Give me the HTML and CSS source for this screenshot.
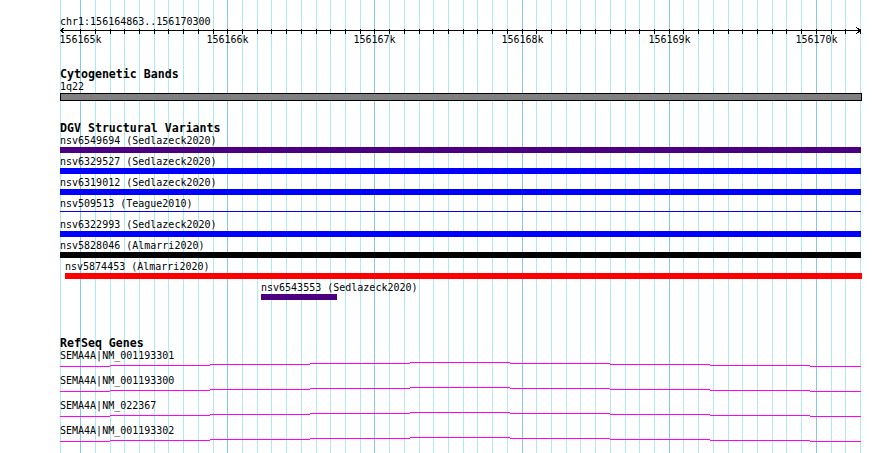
FILE: index.html
```html
<!doctype html>
<html lang="en">
<head>
  <meta charset="utf-8">
  <title>chr1:156164863..156170300</title>
  <meta name="viewport" content="width=device-width, initial-scale=1">
  <link rel="stylesheet" href="styles.css">
</head>
<body>
<div class="browser">
  <svg class="grid" id="grid" width="890" height="453"></svg>

  <div class="ruler">
    <div class="locus">chr1:156164863..156170300</div>
    <svg class="axis" id="axis" width="890" height="17">
      <line class="axis-line" x1="60" y1="3.5" x2="861" y2="3.5"/>
      <polyline class="axis-line" points="64.5,0.5 60.5,3.5 64.5,6.5"/>
      <polyline class="axis-line" points="856.5,0.5 860.5,3.5 856.5,6.5"/>
    </svg>
  </div>

  <section class="track cyto">
    <h2>Cytogenetic Bands</h2>
    <div class="label">1q22</div>
    <div class="band"></div>
  </section>

  <section class="track dgv">
    <h2>DGV Structural Variants</h2>
    <div class="feature">
      <div class="label">nsv6549694 (Sedlazeck2020)</div>
      <div class="bar indigo" style="width:801px"></div>
    </div>
    <div class="feature">
      <div class="label">nsv6329527 (Sedlazeck2020)</div>
      <div class="bar blue" style="width:801px"></div>
    </div>
    <div class="feature">
      <div class="label">nsv6319012 (Sedlazeck2020)</div>
      <div class="bar blue" style="width:801px"></div>
    </div>
    <div class="feature">
      <div class="label">nsv509513 (Teague2010)</div>
      <div class="bar line blue" style="width:801px"></div>
    </div>
    <div class="feature">
      <div class="label">nsv6322993 (Sedlazeck2020)</div>
      <div class="bar blue" style="width:801px"></div>
    </div>
    <div class="feature">
      <div class="label">nsv5828046 (Almarri2020)</div>
      <div class="bar black" style="width:801px"></div>
    </div>
    <div class="feature" style="margin-left:5px">
      <div class="label">nsv5874453 (Almarri2020)</div>
      <div class="bar red" style="width:797px"></div>
    </div>
    <div class="feature" style="margin-left:201px">
      <div class="label">nsv6543553 (Sedlazeck2020)</div>
      <div class="bar indigo" style="width:76px"></div>
    </div>
  </section>

  <section class="track genes">
    <h2>RefSeq Genes</h2>
    <div class="gene">
      <div class="label">SEMA4A|NM_001193301</div>
      <svg class="transcript" width="801" height="14"><path d="M0 6.5H50M50 5.5H150M150 4.5H250M250 3.5H350M350 2.5H450M450 3.5H550M550 4.5H650M650 5.5H750M750 6.5H801"/></svg>
    </div>
    <div class="gene">
      <div class="label">SEMA4A|NM_001193300</div>
      <svg class="transcript" width="801" height="14"><path d="M0 6.5H50M50 5.5H150M150 4.5H250M250 3.5H350M350 2.5H450M450 3.5H550M550 4.5H650M650 5.5H750M750 6.5H801"/></svg>
    </div>
    <div class="gene">
      <div class="label">SEMA4A|NM_022367</div>
      <svg class="transcript" width="801" height="14"><path d="M0 6.5H50M50 5.5H150M150 4.5H250M250 3.5H350M350 2.5H450M450 3.5H550M550 4.5H650M650 5.5H750M750 6.5H801"/></svg>
    </div>
    <div class="gene">
      <div class="label">SEMA4A|NM_001193302</div>
      <svg class="transcript" width="801" height="14"><path d="M0 6.5H50M50 5.5H150M150 4.5H250M250 3.5H350M350 2.5H450M450 3.5H550M550 4.5H650M650 5.5H750M750 6.5H801"/></svg>
    </div>
  </section>
</div>
<script>
  const view = { start: 156164863, end: 156170300, left: 60, width: 800 };
  const scale = view.width / (view.end - view.start);
  const svgNS = 'http://www.w3.org/2000/svg';

  function xOf(pos){
    return Math.round(view.left + (pos - view.start) * scale) + 0.5;
  }

  function add(parent, tag, attrs, text){
    const el = document.createElementNS(svgNS, tag);
    for (const k in attrs) el.setAttribute(k, attrs[k]);
    if (text) el.textContent = text;
    parent.appendChild(el);
    return el;
  }

  const grid = document.getElementById('grid');
  const axis = document.getElementById('axis');

  // left edge of the view
  add(grid, 'line', { x1: 60.5, y1: 0, x2: 60.5, y2: 453, class: 'minor' });

  for (let p = 156165000; p <= view.end; p += 100){
    const x = xOf(p);
    const major = p % 1000 === 0;
    add(grid, 'line', { x1: x, y1: 0, x2: x, y2: 453, class: major ? 'major' : 'minor' });
    add(axis, 'line', { x1: x, y1: 2, x2: x, y2: 7, class: 'axis-line' });
    if (major) add(axis, 'text', { x: x, y: 16, class: 'tick-label' }, (p / 1000) + 'k');
  }
</script>
</body>
</html>
```

FILE: styles.css
```css
:root {
  --grid-minor: #aaeaf0;
  --grid-major: #82c6ec;
  --indigo: #4b0082;
  --band: #808080;
  --gene: #ff00ff;
}
body {
  margin: 0;
  background: #fff;
  color: #000;
  font-family: "DejaVu Sans Mono", "Liberation Mono", monospace;
  font-size: 10px;
}
.browser { position: relative; width: 890px; height: 453px; overflow: hidden; }

/* background grid, drawn behind the tracks */
.grid { position: absolute; top: 0; left: 0; shape-rendering: crispEdges; }
.grid .minor { stroke: var(--grid-minor); }
.grid .major { stroke: var(--grid-major); }

.ruler { position: relative; padding-top: 16px; }
.locus { padding-left: 60px; line-height: 11px; }
.axis { display: block; shape-rendering: crispEdges; }
.axis-line { stroke: #000; fill: none; stroke-width: 1; }
.tick-label {
  font-family: "DejaVu Sans Mono", "Liberation Mono", monospace;
  font-size: 10px;
  text-anchor: middle;
  fill: #000;
}

.track { position: relative; display: flow-root; padding-left: 60px; }
.track h2 {
  margin: 0;
  padding-top: 1px;
  height: 12px;
  font-size: 11.6px;
  font-weight: bold;
  line-height: 13px;
}
.label { padding-top: 1px; height: 10px; line-height: 11px; white-space: nowrap; }

.cyto { margin-top: 23px; }
.band {
  margin-top: 2px;
  width: 800px; height: 6px;
  background: var(--band);
  border: 1px solid #000;
}

.dgv { margin-top: 20px; }
.bar { height: 6px; margin: 2px 0; }
.bar.line { height: 1px; margin: 3px 0 6px; }
.indigo { background: var(--indigo); }
.blue { background: #00f; }
.black { background: #000; }
.red { background: #f00; }

.genes { margin-top: 34px; }
.transcript { display: block; shape-rendering: crispEdges; }
.transcript path { stroke: var(--gene); stroke-width: 1; fill: none; }
```
